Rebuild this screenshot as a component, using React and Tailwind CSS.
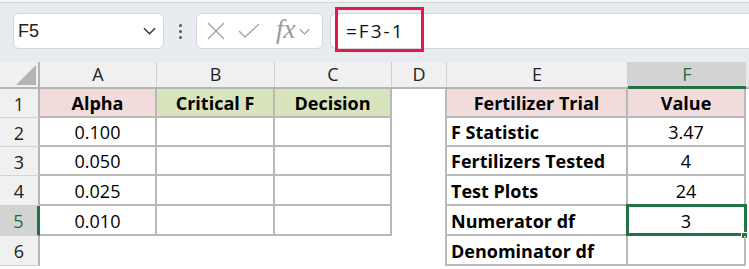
const COLS = [
  { key: "A", w: "w-[117px]" },
  { key: "B", w: "w-[118px]" },
  { key: "C", w: "w-[117px]" },
  { key: "D", w: "w-[55px]" },
  { key: "E", w: "w-[181px]" },
  { key: "F", w: "w-[118px]" },
];

const ROWS = [
  { n: 1, h: "h-[29px]", a: "Alpha", e: "Fertilizer Trial", f: "Value", head: true },
  { n: 2, h: "h-[29px]", a: "0.100", e: "F Statistic", f: "3.47" },
  { n: 3, h: "h-[29px]", a: "0.050", e: "Fertilizers Tested", f: "4" },
  { n: 4, h: "h-[30px]", a: "0.025", e: "Test Plots", f: "24" },
  { n: 5, h: "h-[30px]", a: "0.010", e: "Numerator df", f: "3", active: true },
  { n: 6, h: "h-[30px]", a: null, e: "Denominator df", f: "" },
];

// borders only on the two table ranges, gridlines are off
const line = "border-r-2 border-b-2 border-[#b9b9b9] pt-[2px]";

const Chevron = ({ className }) => (
  <svg viewBox="0 0 14 8" className={className} fill="none" stroke="currentColor" strokeWidth="1.5">
    <polyline points="1,1 7,7 13,1" />
  </svg>
);

const FormulaBar = () => (
  <div className="relative h-[62px] bg-[#e8ebef]">
    <div className="h-[3px] bg-[#f4f5f7] border-b border-[#d3d6da]" />
    <div className="flex items-start pt-[10px] pl-[13px]">
      <div className="flex items-center justify-between w-[151px] h-[36px] bg-white border border-[#d3d6da] rounded-md pl-[4px] pr-[7px]">
        <span className="text-[18px] text-[#222] font-['Liberation_Sans']">F5</span>
        <Chevron className="w-[13px] h-[8px] text-[#333]" />
      </div>
      <div className="flex flex-col items-center justify-center gap-[3px] w-[32px] h-[36px]">
        <span className="w-[3px] h-[3px] rounded-full bg-[#555]" />
        <span className="w-[3px] h-[3px] rounded-full bg-[#555]" />
        <span className="w-[3px] h-[3px] rounded-full bg-[#555]" />
      </div>
      <div className="flex items-center w-[127px] h-[36px] bg-white border border-[#d3d6da] rounded-md pl-[9px]">
        <svg viewBox="0 0 20 20" className="w-[20px] h-[20px] text-[#a3a3a3]" fill="none" stroke="currentColor" strokeWidth="1.3">
          <line x1="2" y1="2" x2="18" y2="18" />
          <line x1="18" y1="2" x2="2" y2="18" />
        </svg>
        <svg viewBox="0 0 22 16" className="ml-[12px] w-[22px] h-[16px] text-[#a3a3a3]" fill="none" stroke="currentColor" strokeWidth="1.3">
          <polyline points="1,8 7,14 21,1" />
        </svg>
        <span className="ml-[16px] text-[27px] italic text-[#9a9a9a] font-['Liberation_Serif'] leading-none -mt-[4px]">fx</span>
        <Chevron className="ml-[3px] w-[11px] h-[7px] text-[#9a9a9a]" />
      </div>
      <div className="ml-[7px] flex-1 flex items-center h-[36px] bg-white border-y border-l border-[#d3d6da] rounded-l-md pl-[15px]">
        <span className="text-[19px] tracking-[2px] text-[#111] font-['Open_Sans']">=F3-1</span>
      </div>
    </div>
    <div className="absolute left-[335px] top-[7px] w-[89px] h-[45px] border-[3px] border-[#e3194b]" />
  </div>
);

const HeaderRow = () => (
  <div className="flex h-[27px] bg-[#f0f0f0] border-b-2 border-[#b5b5b5] text-[18px] text-[#222]">
    <div className="relative w-[40px] border-r-2 border-[#b5b5b5]">
      <svg viewBox="0 0 20 20" className="absolute left-[16px] top-[3px] w-[20px] h-[20px]">
        <polygon points="20,0 20,20 0,20" fill="#b4b4b4" />
      </svg>
    </div>
    {COLS.map((c) =>
      c.key === "F" ? (
        <div key={c.key} className={`${c.w} flex items-center justify-center bg-[#d3d3d3] text-[#1e6b41] border-b-[3px] border-[#217346] -mb-[2px]`}>
          {c.key}
        </div>
      ) : (
        <div key={c.key} className={`${c.w} flex items-center justify-center border-r border-[#cfcfcf]`}>
          {c.key}
        </div>
      )
    )}
    <div className="flex-1 bg-[#e9e9e9]" />
  </div>
);

const Row = ({ r }) => {
  const bold = r.head ? "font-bold" : "";
  return (
    <div className={`flex ${r.h} text-[18px] text-black`}>
      <div
        className={`w-[40px] flex items-center justify-center pt-[2px] border-b border-[#d2d2d2] ${
          r.active
            ? "bg-[#d3d3d3] text-[#1e6b41] border-r-[3px] border-r-[#217346]"
            : "bg-[#f0f0f0] text-[#222] border-r-2 border-r-[#b5b5b5]"
        }`}
      >
        {r.n}
      </div>
      {r.a === null ? (
        <div className="w-[352px]" />
      ) : (
        <>
          <div className={`w-[117px] flex items-center justify-center ${line} ${r.head ? "bg-[#f2dcdb]" : ""} ${bold}`}>{r.a}</div>
          <div className={`w-[118px] flex items-center justify-center ${line} ${r.head ? "bg-[#d8e4bc]" : ""} ${bold}`}>{r.head ? "Critical F" : ""}</div>
          <div className={`w-[117px] flex items-center justify-center ${line} ${r.head ? "bg-[#d8e4bc]" : ""} ${bold}`}>{r.head ? "Decision" : ""}</div>
        </>
      )}
      <div className="w-[55px] border-r-2 border-[#b9b9b9]" />
      <div className={`w-[181px] flex items-center whitespace-nowrap ${line} ${r.head ? "bg-[#f2dcdb] justify-center" : "pl-[4px]"} font-bold`}>{r.e}</div>
      <div className={`relative w-[118px] flex items-center justify-center ${line} ${r.head ? "bg-[#f2dcdb]" : ""} ${bold}`}>
        {r.f}
        {r.active && (
          <>
            <div className="absolute -left-[2px] -top-[2px] w-[121px] h-[32px] border-[3px] border-[#217346]" />
            <div className="absolute -right-[4px] -bottom-[5px] w-[7px] h-[7px] bg-[#217346] border border-white" />
          </>
        )}
      </div>
      <div className="flex-1" />
    </div>
  );
};

export default function App() {
  return (
    <div className="w-[749px] h-[269px] overflow-hidden bg-white font-['Open_Sans','Liberation_Sans',sans-serif]">
      <FormulaBar />
      <HeaderRow />
      {ROWS.map((r) => (
        <Row key={r.n} r={r} />
      ))}
    </div>
  );
}
